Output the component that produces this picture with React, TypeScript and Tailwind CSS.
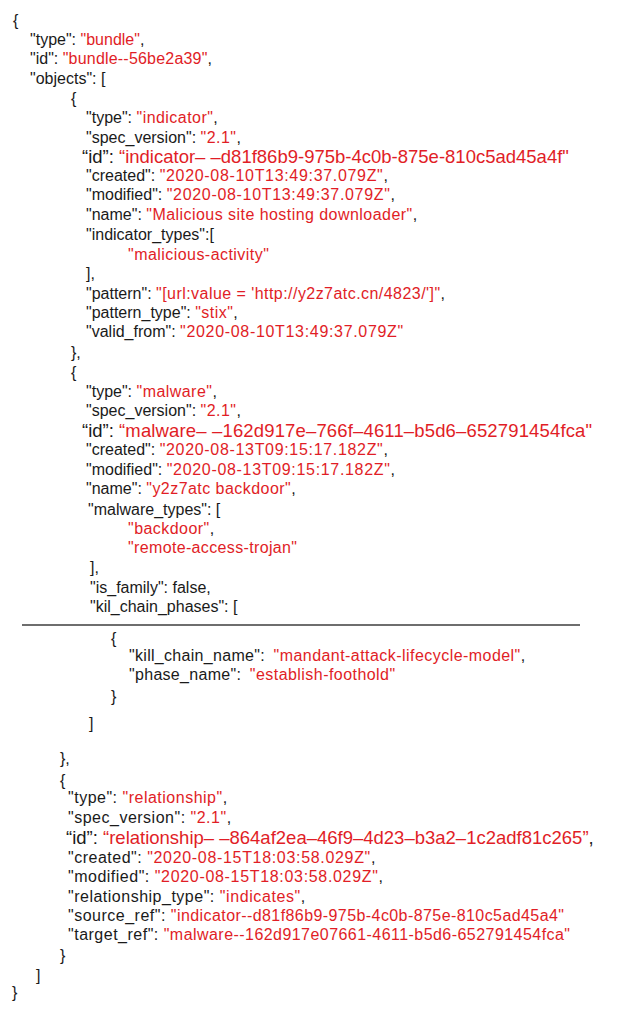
import type { ReactNode } from "react";

const K = ({ children, cls = "" }: { children: ReactNode; cls?: string }) => (
  <span className={`text-[#1a1a1a] ${cls}`}>{children}</span>
);
// values: red, slightly wider than the keys in the source picture
const V = ({ children, cls = "tracking-[0.45px]" }: { children: ReactNode; cls?: string }) => (
  <span className={`text-[#e11d26] ${cls}`}>{children}</span>
);
const D = ({ children }: { children: ReactNode }) => (
  <V cls="tracking-[0.68px]">{children}</V>
);

const Line = ({ cls, children }: { cls: string; children: ReactNode }) => (
  <div className={`h-[19px] whitespace-pre leading-[19px] ${cls}`}>{children}</div>
);

export default function App() {
  return (
    <div className="min-h-[1016px] w-[622px] bg-white pt-[11px] font-['Liberation_Sans',Arial,sans-serif] text-[16px] text-[#1a1a1a]">
      <Line cls="pl-[13px]">{"{"}</Line>
      <Line cls="pl-[30px]"><K>"type"</K>: <V cls="">"bundle"</V>,</Line>
      <Line cls="pl-[30px]"><K>"id"</K>: <V cls="tracking-[0.2px]">"bundle--56be2a39"</V>,</Line>
      <Line cls="mt-px pl-[30px]"><K>"objects"</K>: [</Line>
      <Line cls="mt-px pl-[71px]">{"{"}</Line>
      <Line cls="pl-[86px]"><K>"type"</K>: <V>"indicator"</V>,</Line>
      <Line cls="mt-px pl-[86px]"><K>"spec_version"</K>: <V>"2.1"</V>,</Line>
      <Line cls="pl-[82px] text-[18.5px]"><K>“id”</K>: <V cls="">“indicator– –d81f86b9-975b-4c0b-875e-810c5ad45a4f"</V></Line>
      <Line cls="pl-[86px]"><K>"created"</K>: <D>"2020-08-10T13:49:37.079Z"</D>,</Line>
      <Line cls="pl-[86px]"><K>"modified"</K>: <D>"2020-08-10T13:49:37.079Z"</D>,</Line>
      <Line cls="mt-px pl-[86px]"><K>"name"</K>: <V>"Malicious site hosting downloader"</V>,</Line>
      <Line cls="mt-px pl-[86px]"><K>"indicator_types"</K>:[</Line>
      <Line cls="mt-px pl-[128px]"><V>"malicious-activity"</V></Line>
      <Line cls="pl-[86px]">],</Line>
      <Line cls="mt-px pl-[86px]"><K>"pattern"</K>: <V>"[url:value = 'http://y2z7atc.cn/4823/']"</V>,</Line>
      <Line cls="pl-[86px]"><K>"pattern_type"</K>: <V>"stix"</V>,</Line>
      <Line cls="pl-[86px]"><K>"valid_from"</K>: <D>"2020-08-10T13:49:37.079Z"</D></Line>
      <Line cls="mt-[2px] pl-[71px]">{"},"}</Line>
      <Line cls="mt-px pl-[71px]">{"{"}</Line>
      <Line cls="pl-[86px]"><K>"type"</K>: <V>"malware"</V>,</Line>
      <Line cls="pl-[86px]"><K>"spec_version"</K>: <V>"2.1"</V>,</Line>
      <Line cls="mt-px pl-[82px] text-[18.5px]"><K>“id”</K>: <V cls="tracking-[0.15px]">“malware– –162d917e–766f–4611–b5d6–652791454fca"</V></Line>
      <Line cls="pl-[86px]"><K>"created"</K>: <D>"2020-08-13T09:15:17.182Z"</D>,</Line>
      <Line cls="mt-px pl-[86px]"><K>"modified"</K>: <D>"2020-08-13T09:15:17.182Z"</D>,</Line>
      <Line cls="pl-[86px]"><K>"name"</K>: <V>"y2z7atc backdoor"</V>,</Line>
      <Line cls="mt-[2px] pl-[88px]"><K>"malware_types"</K>: [</Line>
      <Line cls="pl-[128px]"><V>"backdoor"</V>,</Line>
      <Line cls="pl-[128px]"><V cls="tracking-[0.35px]">"remote-access-trojan"</V></Line>
      <Line cls="mt-px pl-[90px]">],</Line>
      <Line cls="mt-px pl-[90px]"><K>"is_family"</K>: false,</Line>
      <Line cls="pl-[90px]"><K>"kil_chain_phases"</K>: [</Line>
      <div className="ml-[22px] mt-[8px] h-[2px] w-[558px] bg-[#6e6e6e]" />
      <Line cls="mt-[3px] pl-[111px]">{"{"}</Line>
      <Line cls="-mt-[2px] pl-[129px]"><K cls="tracking-[0.3px]">"kill_chain_name"</K>:  <V cls="tracking-[0.45px]">"mandant-attack-lifecycle-model"</V>,</Line>
      <Line cls="pl-[129px]"><K cls="tracking-[0.3px]">"phase_name"</K>:  <V cls="tracking-[0.45px]">"establish-foothold"</V></Line>
      <Line cls="mt-[3px] pl-[111px]">{"}"}</Line>
      <Line cls="mt-[8px] pl-[89px]">]</Line>
      <Line cls="mt-[16px] pl-[60px]">{"},"}</Line>
      <Line cls="mt-[3px] pl-[60px]">{"{"}</Line>
      <div className="tracking-[0.5px]">
        <Line cls="-mt-[2px] pl-[68px]"><K>"type"</K>: <V cls="">"relationship"</V>,</Line>
        <Line cls="mt-px pl-[68px]"><K>"spec_version"</K>: <V cls="">"2.1"</V>,</Line>
        <Line cls="mt-px pl-[66px] text-[18.5px] tracking-normal"><K>“id”</K>: <V cls="">“relationship– –864af2ea–46f9–4d23–b3a2–1c2adf81c265”</V>,</Line>
        <Line cls="mt-px pl-[68px]"><K>"created"</K>: <D>"2020-08-15T18:03:58.029Z"</D>,</Line>
        <Line cls="pl-[68px]"><K>"modified"</K>: <D>"2020-08-15T18:03:58.029Z"</D>,</Line>
        <Line cls="mt-px pl-[68px]"><K>"relationship_type"</K>: <V cls="tracking-[0.6px]">"indicates"</V>,</Line>
        <Line cls="pl-[68px]"><K>"source_ref"</K>: <V cls="tracking-[0.42px]">"indicator--d81f86b9-975b-4c0b-875e-810c5ad45a4"</V></Line>
        <Line cls="pl-[68px]"><K>"target_ref"</K>: <V cls="tracking-[0.45px]">"malware--162d917e07661-4611-b5d6-652791454fca"</V></Line>
      </div>
      <Line cls="mt-[2px] pl-[60px]">{"}"}</Line>
      <Line cls="mt-px pl-[36px]">]</Line>
      <Line cls="-mt-[2px] pl-[12px]">{"}"}</Line>
    </div>
  );
}
